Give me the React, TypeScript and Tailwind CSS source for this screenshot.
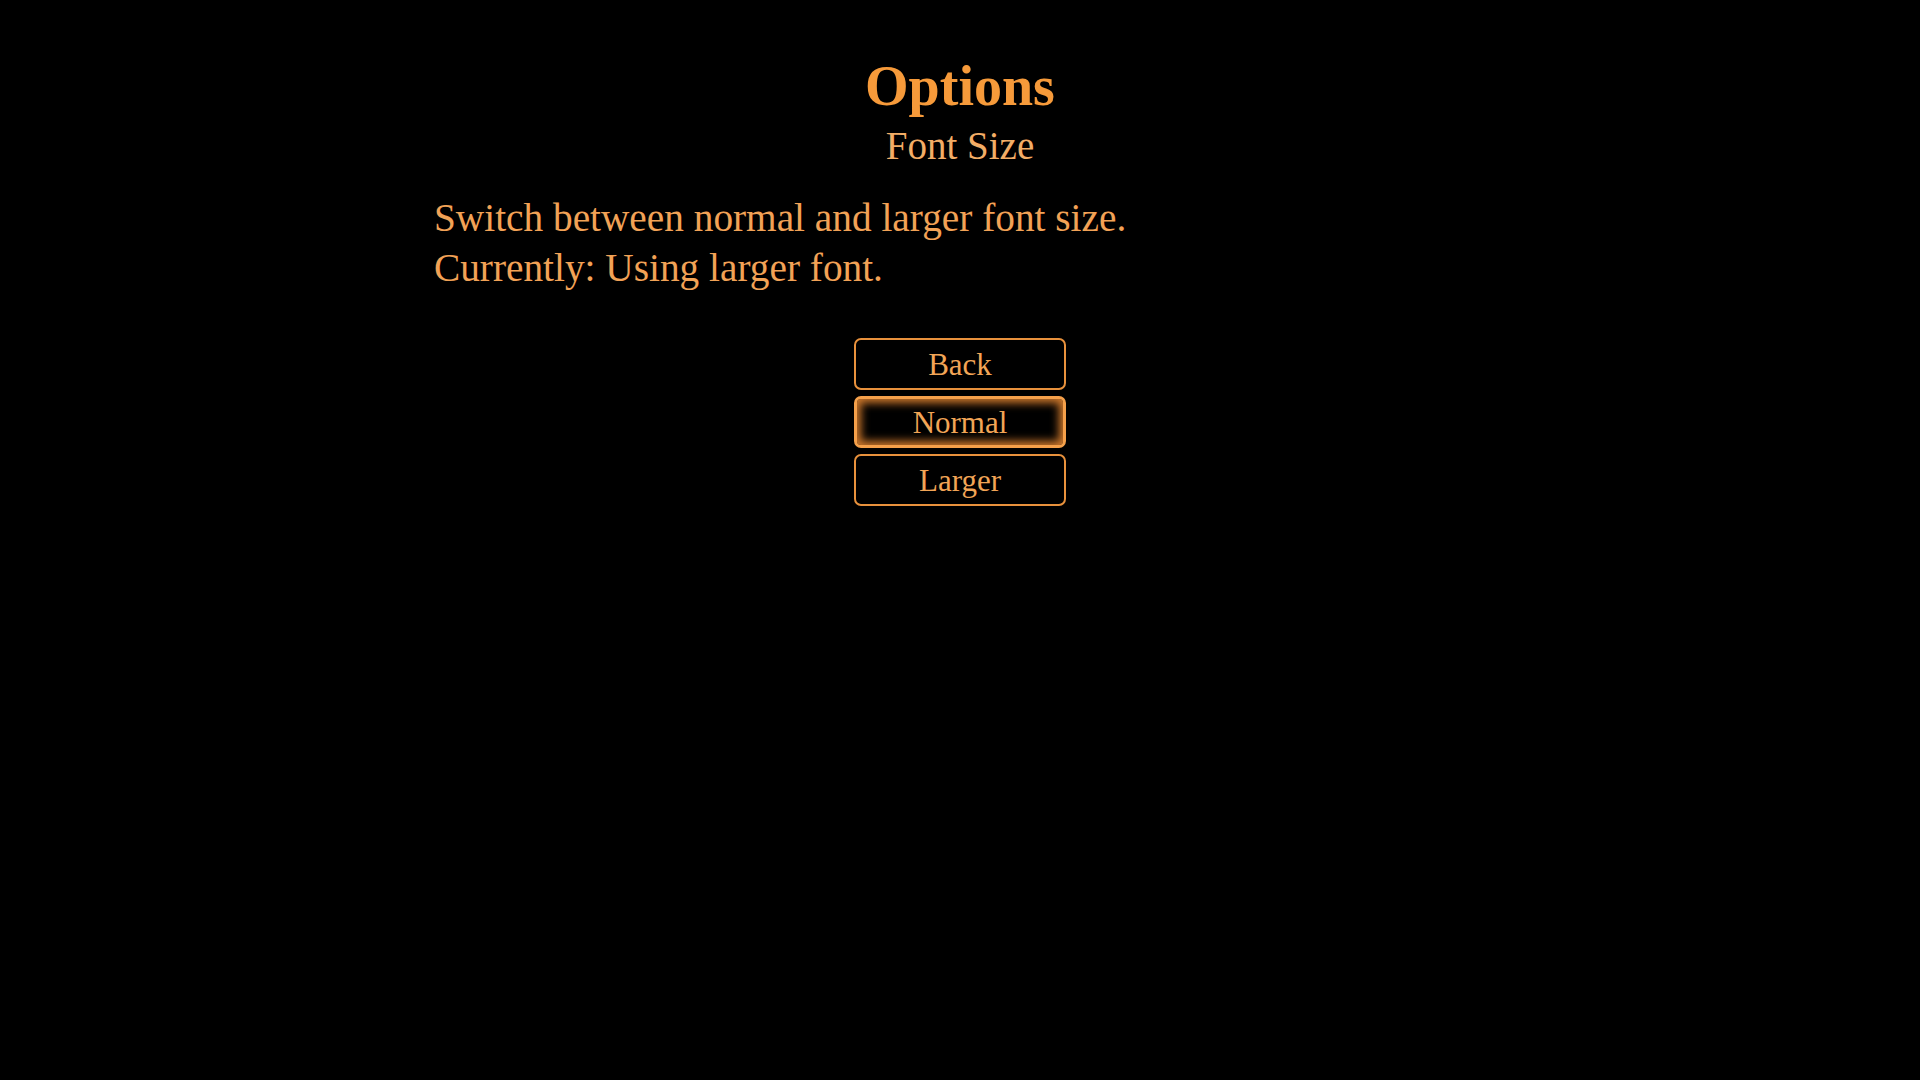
import React from 'react';

const serif = { fontFamily: '"Liberation Serif", "DejaVu Serif", serif' };

const OptionButton: React.FC<{ label: string; active?: boolean }> = ({ label, active }) => (
  <button
    className={
      'flex h-[52px] w-[212px] items-center justify-center rounded-[7px] bg-black text-[31px] leading-none text-[#f2a556] ' +
      (active
        ? 'border-[3px] border-[#f5a04a] shadow-[inset_0_0_9px_4px_rgba(240,140,50,0.85)]'
        : 'border-2 border-[#e8913c]')
    }
  >
    {label}
  </button>
);

const App: React.FC = () => {
  return (
    <div className="min-h-screen w-full bg-black" style={serif}>
      <div className="mx-auto flex w-[1052px] flex-col items-center pt-[54px]">
        <h1 className="text-[56px] font-bold leading-[64px] text-[#f69a3a]">Options</h1>
        <h2 className="mt-[5px] text-[39px] leading-[46px] text-[#f3ad66]">Font Size</h2>

        <div className="mt-[24px] w-full text-[39.3px] leading-[50px] text-[#f2a256]">
          <p>Switch between normal and larger font size.</p>
          <p>Currently: Using larger font.</p>
        </div>

        <div className="mt-[45px] flex flex-col gap-[6px]">
          <OptionButton label="Back" />
          <OptionButton label="Normal" active />
          <OptionButton label="Larger" />
        </div>
      </div>
    </div>
  );
};

export default App;
